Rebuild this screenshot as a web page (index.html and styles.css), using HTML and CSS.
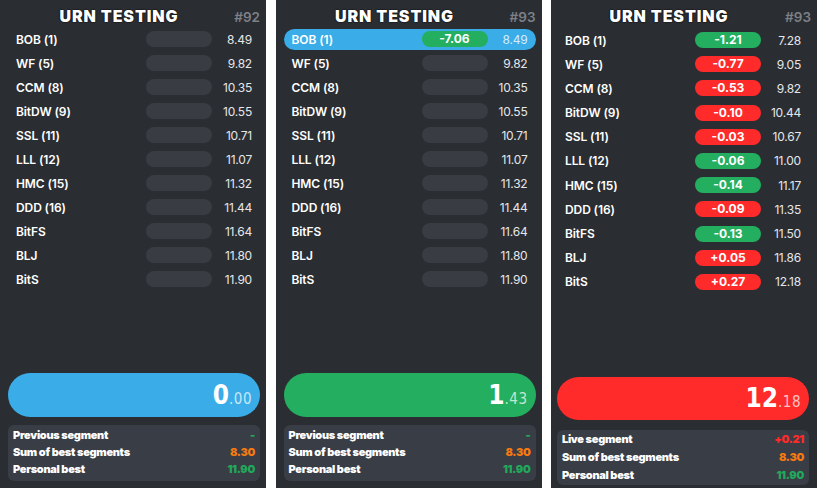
FILE: index.html
```html
<!DOCTYPE html>
<html>
<head>
<meta charset="utf-8">
<link rel="stylesheet" href="styles.css">
</head>
<body>
<div class="app">
  <section class="panel">
    <header class="head"><h1 class="title">URN TESTING</h1><span class="num">#92</span></header>
    <ul class="splits">
      <li class="split"><span class="name">BOB (1)</span><span class="delta"></span><span class="time">8.49</span></li>
      <li class="split"><span class="name">WF (5)</span><span class="delta"></span><span class="time">9.82</span></li>
      <li class="split"><span class="name">CCM (8)</span><span class="delta"></span><span class="time">10.35</span></li>
      <li class="split"><span class="name">BitDW (9)</span><span class="delta"></span><span class="time">10.55</span></li>
      <li class="split"><span class="name">SSL (11)</span><span class="delta"></span><span class="time">10.71</span></li>
      <li class="split"><span class="name">LLL (12)</span><span class="delta"></span><span class="time">11.07</span></li>
      <li class="split"><span class="name">HMC (15)</span><span class="delta"></span><span class="time">11.32</span></li>
      <li class="split"><span class="name">DDD (16)</span><span class="delta"></span><span class="time">11.44</span></li>
      <li class="split"><span class="name">BitFS</span><span class="delta"></span><span class="time">11.64</span></li>
      <li class="split"><span class="name">BLJ</span><span class="delta"></span><span class="time">11.80</span></li>
      <li class="split"><span class="name">BitS</span><span class="delta"></span><span class="time">11.90</span></li>
    </ul>
    <div class="timer timer-blue"><span class="big">0</span><span class="small">.00</span></div>
    <div class="info">
      <div class="info-row"><span>Previous segment</span><span class="val-green">-</span></div>
      <div class="info-row"><span>Sum of best segments</span><span class="val-orange">8.30</span></div>
      <div class="info-row"><span>Personal best</span><span class="val-green">11.90</span></div>
    </div>
  </section>

  <section class="panel">
    <header class="head"><h1 class="title">URN TESTING</h1><span class="num">#93</span></header>
    <ul class="splits">
      <li class="split current"><span class="name">BOB (1)</span><span class="delta ahead">-7.06</span><span class="time">8.49</span></li>
      <li class="split"><span class="name">WF (5)</span><span class="delta"></span><span class="time">9.82</span></li>
      <li class="split"><span class="name">CCM (8)</span><span class="delta"></span><span class="time">10.35</span></li>
      <li class="split"><span class="name">BitDW (9)</span><span class="delta"></span><span class="time">10.55</span></li>
      <li class="split"><span class="name">SSL (11)</span><span class="delta"></span><span class="time">10.71</span></li>
      <li class="split"><span class="name">LLL (12)</span><span class="delta"></span><span class="time">11.07</span></li>
      <li class="split"><span class="name">HMC (15)</span><span class="delta"></span><span class="time">11.32</span></li>
      <li class="split"><span class="name">DDD (16)</span><span class="delta"></span><span class="time">11.44</span></li>
      <li class="split"><span class="name">BitFS</span><span class="delta"></span><span class="time">11.64</span></li>
      <li class="split"><span class="name">BLJ</span><span class="delta"></span><span class="time">11.80</span></li>
      <li class="split"><span class="name">BitS</span><span class="delta"></span><span class="time">11.90</span></li>
    </ul>
    <div class="timer timer-green"><span class="big">1</span><span class="small">.43</span></div>
    <div class="info">
      <div class="info-row"><span>Previous segment</span><span class="val-green">-</span></div>
      <div class="info-row"><span>Sum of best segments</span><span class="val-orange">8.30</span></div>
      <div class="info-row"><span>Personal best</span><span class="val-green">11.90</span></div>
    </div>
  </section>

  <section class="panel panel-final">
    <header class="head"><h1 class="title">URN TESTING</h1><span class="num">#93</span></header>
    <ul class="splits">
      <li class="split"><span class="name">BOB (1)</span><span class="delta ahead">-1.21</span><span class="time">7.28</span></li>
      <li class="split"><span class="name">WF (5)</span><span class="delta behind">-0.77</span><span class="time">9.05</span></li>
      <li class="split"><span class="name">CCM (8)</span><span class="delta behind">-0.53</span><span class="time">9.82</span></li>
      <li class="split"><span class="name">BitDW (9)</span><span class="delta behind">-0.10</span><span class="time">10.44</span></li>
      <li class="split"><span class="name">SSL (11)</span><span class="delta behind">-0.03</span><span class="time">10.67</span></li>
      <li class="split"><span class="name">LLL (12)</span><span class="delta ahead">-0.06</span><span class="time">11.00</span></li>
      <li class="split"><span class="name">HMC (15)</span><span class="delta ahead">-0.14</span><span class="time">11.17</span></li>
      <li class="split"><span class="name">DDD (16)</span><span class="delta behind">-0.09</span><span class="time">11.35</span></li>
      <li class="split"><span class="name">BitFS</span><span class="delta ahead">-0.13</span><span class="time">11.50</span></li>
      <li class="split"><span class="name">BLJ</span><span class="delta behind">+0.05</span><span class="time">11.86</span></li>
      <li class="split"><span class="name">BitS</span><span class="delta behind">+0.27</span><span class="time">12.18</span></li>
    </ul>
    <div class="timer timer-red"><span class="big">12</span><span class="small">.18</span></div>
    <div class="info">
      <div class="info-row"><span>Live segment</span><span class="val-red">+0.21</span></div>
      <div class="info-row"><span>Sum of best segments</span><span class="val-orange">8.30</span></div>
      <div class="info-row"><span>Personal best</span><span class="val-green">11.90</span></div>
    </div>
  </section>
</div>
</body>
</html>
```

FILE: styles.css
```css
* { box-sizing: border-box; }
html, body { margin: 0; padding: 0; background: #ffffff; }
body { font-family: Inter, "Noto Sans", sans-serif; color: #ffffff; }

.app {
  display: flex;
  column-gap: 9.5px;
  width: 817px;
  height: 488px;
}

.panel {
  width: 266px;
  height: 488px;
  flex: none;
  background: #2a2d32;
  display: flex;
  flex-direction: column;
  padding: 0 6px 7px 8px;
}

.head {
  display: flex;
  align-items: baseline;
  height: 27px;
}
.title {
  flex: 1;
  margin: 6px 0 0 0;
  text-align: center;
  font-size: 16px;
  font-weight: 900;
  line-height: 20px;
  letter-spacing: 0.9px;
  color: #ffffff;
  text-shadow: 0 0 1.5px #000, 0 0 1px #000;
}
.num {
  width: 30px;
  text-align: right;
  font-size: 13.5px;
  font-weight: 600;
  color: #7d8087;
}

.splits {
  list-style: none;
  margin: 0;
  padding: 1.5px 0 0 0;
  display: flex;
  flex-direction: column;
  row-gap: 3px;
}
.split {
  display: grid;
  grid-template-columns: 1fr 66px 40px;
  align-items: center;
  width: 252px;
  height: 21px;
  padding: 0 8px 0 8px;
  border-radius: 11px;
}
.name {
  font-size: 12px;
  font-weight: 600;
  color: #ffffff;
  white-space: nowrap;
  letter-spacing: -0.1px;
}
.delta {
  height: 16px;
  border-radius: 8px;
  background: #393c43;
  font-size: 12px;
  font-weight: 700;
  line-height: 16px;
  text-align: center;
  color: #ffffff;
}
.delta.ahead { background: #24ae5f; }
.delta.behind { background: #ff2b2b; }
.time {
  text-align: right;
  font-size: 12px;
  font-weight: 400;
  letter-spacing: -0.2px;
  color: #e6e7e9;
}
.split.current { background: #3aade8; }
.split.current .time { color: #d4ecfa; }

.timer {
  margin-top: auto;
  height: 44px;
  border-radius: 22px;
  display: flex;
  align-items: baseline;
  justify-content: flex-end;
  padding: 0 8px 0 0;
  width: 252px;
  font-family: "DejaVu Sans Condensed", "DejaVu Sans", sans-serif;
  line-height: 44px;
}
.big { font-size: 26px; font-weight: 700; color: #ffffff; }
.small { font-size: 15px; font-weight: 400; color: rgba(255,255,255,0.72); letter-spacing: 0.5px; }
.timer-blue { background: #3aade8; }
.timer-green { background: #24ae5f; }
.timer-red { background: #ff2b2b; }

.info {
  margin-top: 8px;
  width: 252px;
  height: 56px;
  background: #393d45;
  border-radius: 6px;
  padding: 1.5px 5px 3.5px 5px;
}
.info-row {
  display: flex;
  justify-content: space-between;
  align-items: center;
  height: 17px;
  font-size: 11px;
  font-weight: 900;
  letter-spacing: -0.3px;
}
.val-green { color: #22a85a; }
.val-orange { color: #f57a12; }
.val-red { color: #ff2b2b; }

.panel-final { padding-bottom: 3px; padding-left: 6px; }
.panel-final .head { height: 28px; }
.panel-final .splits { row-gap: 3.2px; }
.panel-final .timer { height: 43px; line-height: 43px; }
.panel-final .info { margin-top: 10px; height: 55px; padding-top: 0; }
.panel-final .info-row { height: 18px; }
```
